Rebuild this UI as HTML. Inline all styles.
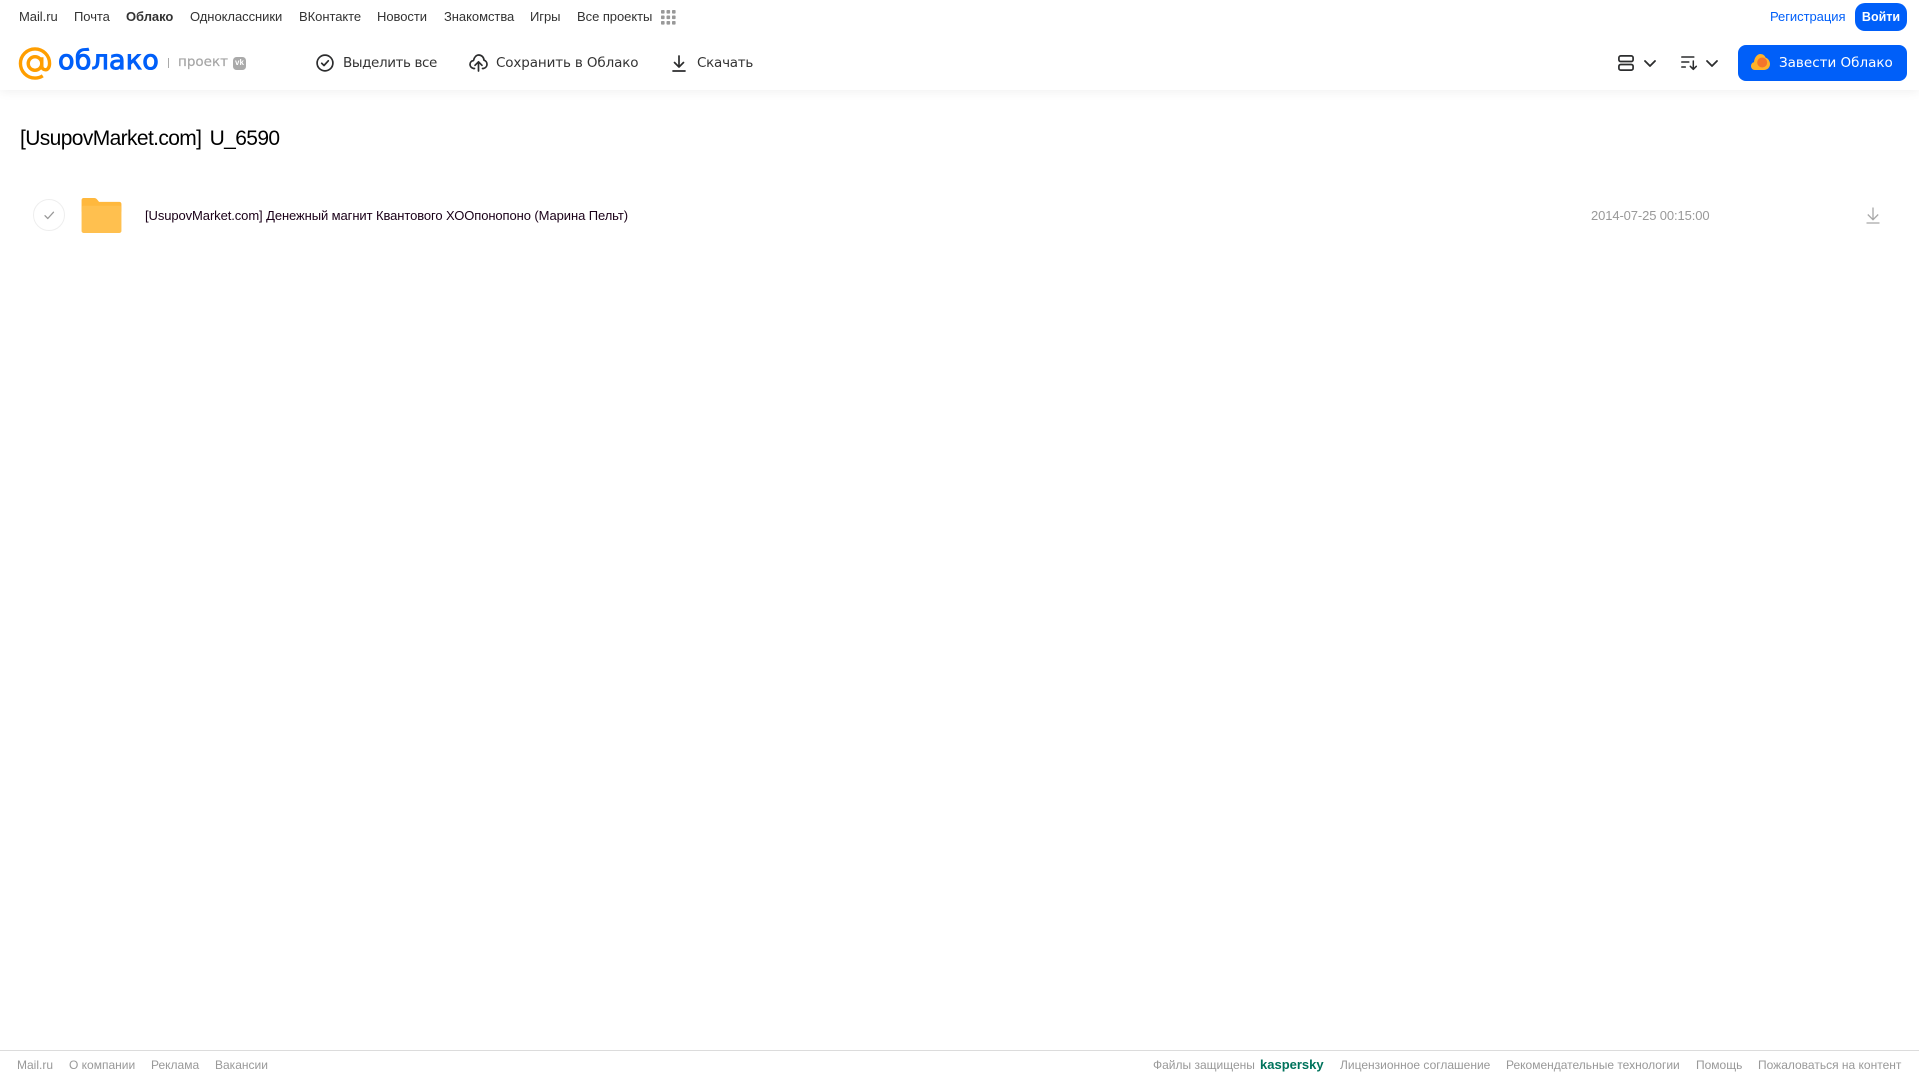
<!DOCTYPE html>
<html lang="ru"><head><meta charset="utf-8"><title>Облако</title>
<style>
html,body{margin:0;padding:0;background:#fff}
body{width:1919px;height:1079px;position:relative;overflow:hidden;font-family:"Liberation Sans",sans-serif}
.t{position:absolute;white-space:nowrap;line-height:20px;height:20px}
.n{top:7px;font-size:13px;color:#333;letter-spacing:-.05px}
.a{top:53px;font-family:"DejaVu Sans",sans-serif;font-size:13.5px;color:#333}
.f{top:1055px;font-size:12px;color:#999}
svg{position:absolute;display:block;overflow:visible}
#hd{position:absolute;left:0;top:0;width:1919px;height:90px;background:#fff;box-shadow:0 2px 10px rgba(0,0,0,.06)}
</style></head><body>
<div id="hd"></div>
<span class="t n" style="left:19px">Mail.ru</span>
<span class="t n" style="left:74px">Почта</span>
<span class="t n" style="left:126px;font-weight:bold">Облако</span>
<span class="t n" style="left:190px">Одноклассники</span>
<span class="t n" style="left:299px">ВКонтакте</span>
<span class="t n" style="left:377px">Новости</span>
<span class="t n" style="left:444px">Знакомства</span>
<span class="t n" style="left:530px">Игры</span>
<span class="t n" style="left:577px">Все проекты</span>
<svg style="left:661px;top:10px" width="15" height="15" fill="#999"><rect width="3.6" height="3.6" rx=".8"/><rect x="5.5" width="3.6" height="3.6" rx=".8"/><rect x="11" width="3.6" height="3.6" rx=".8"/><rect y="5.5" width="3.6" height="3.6" rx=".8"/><rect x="5.500" y="5.5" width="3.6" height="3.6" rx=".8"/><rect x="11" y="5.5" width="3.6" height="3.6" rx=".8"/><rect y="11" width="3.6" height="3.6" rx=".8"/><rect x="5.5" y="11" width="3.6" height="3.6" rx=".8"/><rect x="11" y="11" width="3.6" height="3.6" rx=".8"/></svg>
<span class="t n" style="left:1770px;color:#005ff9">Регистрация</span>
<div style="position:absolute;left:1855px;top:3px;width:52px;height:28px;border-radius:10px;background:#005ff9;color:#fff;font-size:12.5px;font-weight:bold;line-height:28px;text-align:center">Войти</div>

<svg style="left:18px;top:47px" width="34" height="33" viewBox="0 0 34 34" fill="none" stroke="#ff9e00" stroke-width="3.5"><circle cx="17" cy="17" r="7"/><path d="M24 10.500V19.500c0 2.600 1.700 4 3.800 4 2.300 0 4.200-2.500 4.200-6.500C32 8.700 25.300 2 17 2S2 8.700 2 17s6.700 15 15 15c3 0 5.700-.8 8-2.300"/></svg>
<span class="t" style="left:58px;top:44px;height:34px;line-height:34px;font-family:'DejaVu Sans',sans-serif;font-size:27px;letter-spacing:.2px;color:#005ff9;-webkit-text-stroke:1px #005ff9">облако</span>
<div style="position:absolute;left:168px;top:58px;width:1px;height:10px;background:#aaa"></div>
<span class="t" style="left:178px;top:52px;font-family:'DejaVu Sans',sans-serif;font-size:13.5px;color:#a6a6a6;-webkit-text-stroke:.2px #a6a6a6">проект</span>
<div style="position:absolute;left:233px;top:57px;width:13px;height:13px;border-radius:3.500px;background:#aaa;color:#fff;font-size:8px;font-weight:bold;line-height:12px;text-align:center">vk</div>

<svg style="left:316px;top:54px" width="18" height="18" viewBox="0 0 18 18" fill="none" stroke="#2c2d2e" stroke-width="1.700" stroke-linecap="round" stroke-linejoin="round"><circle cx="9" cy="9" r="7.900"/><path d="M5.700 9.300 8 11.500l4.300-4.700"/></svg>
<span class="t a" style="left:343px;letter-spacing:-.4px">Выделить все</span>
<svg style="left:469px;top:54px" width="19" height="18" viewBox="0 0 19 18" fill="none" stroke="#2c2d2e" stroke-width="1.700" stroke-linecap="round" stroke-linejoin="round"><path d="M5.500 14.500H4.600C2.500 14 1 12.400 1 10.400c0-2 1.500-3.600 3.500-3.900C5.200 3.300 7.200 1 9.800 1c2.800 0 5 2.300 5.200 5.200 1.800.5 3 2.200 3 4 0 2.100-1.500 3.900-3.600 4.300h-.9"/><path d="M9.500 17V8M6 11.300l3.500-3.500 3.500 3.500"/></svg>
<span class="t a" style="left:496px;letter-spacing:-.13px">Сохранить в Облако</span>
<svg style="left:672px;top:55px" width="14" height="17" viewBox="0 0 14 17" fill="none" stroke="#2c2d2e" stroke-width="1.700" stroke-linecap="round" stroke-linejoin="round"><path d="M7 1v10.500M2.500 7.500 7 12l4.500-4.500M1 16h12"/></svg>
<span class="t a" style="left:697px;letter-spacing:-.26px">Скачать</span>

<svg style="left:1618px;top:55px" width="16" height="16" viewBox="0 0 16 16" fill="none" stroke="#2c2d2e" stroke-width="1.700"><rect x=".9" y=".9" width="14.200" height="5.600" rx="1.800"/><rect x=".9" y="9.500" width="14.200" height="5.600" rx="1.800"/></svg>
<svg style="left:1644px;top:60px" width="12" height="7" viewBox="0 0 12 7" fill="none" stroke="#2c2d2e" stroke-width="1.800" stroke-linecap="round" stroke-linejoin="round"><path d="M1 1l5 5 5-5"/></svg>
<svg style="left:1681px;top:56px" width="16" height="14" viewBox="0 0 16 14" fill="none" stroke="#2c2d2e" stroke-width="1.500" stroke-linecap="round" stroke-linejoin="round"><path d="M.8 1h12M.8 6h7M.8 11h3.500M12.300 5v8M9.300 10.300l3 3 3-3"/></svg>
<svg style="left:1706px;top:60px" width="12" height="7" viewBox="0 0 12 7" fill="none" stroke="#2c2d2e" stroke-width="1.800" stroke-linecap="round" stroke-linejoin="round"><path d="M1 1l5 5 5-5"/></svg>

<div style="position:absolute;left:1738px;top:45px;width:169px;height:36px;border-radius:8px;background:#005ff9"></div>
<svg style="left:1751px;top:54px" width="19" height="16" viewBox="0 0 19 16"><path d="M4 16C1.700 16 0 14.300 0 12c0-1.900 1.300-3.500 3-3.900C3.400 3.500 6.200 0 9.300 0c2.500 0 4.500 1.400 5.300 3.600C17 4.300 19 7 19 10c0 3.500-2.700 6-6 6z" fill="#ffb229"/><circle cx="11.200" cy="8.500" r="5" fill="#f4752a"/></svg>
<span class="t a" style="left:1779px;color:#fff">Завести Облако</span>

<span class="t" style="left:20px;top:126px;height:26px;line-height:26px;font-size:21px;letter-spacing:-.62px;word-spacing:3px;color:#000">[UsupovMarket.com] U_6590</span>

<div style="position:absolute;left:33px;top:199px;width:30px;height:30px;border:1px solid #eeeeee;border-radius:50%"></div>
<svg style="left:44px;top:211px" width="11" height="9" viewBox="0 0 11 9" fill="none" stroke="#999" stroke-width="1.300" stroke-linecap="round" stroke-linejoin="round"><path d="M1 4.700 3.800 7.500 9.500 1.200"/></svg>
<svg style="left:80.500px;top:198px" width="41" height="35" viewBox="0 0 41 36"><path d="M2 0h11c1.300 0 2.200.5 3 1.500L18 4h21c1.100 0 2 .9 2 2v8H0V2C0 .9.900 0 2 0z" fill="#ffb83d"/><path d="M2 8h37c1.100 0 2 .9 2 2v24c0 1.100-.9 2-2 2H2c-1.100 0-2-.9-2-2V10c0-1.100.9-2 2-2z" fill="#ffc04f"/></svg>
<span class="t" style="left:145px;top:206px;font-size:13px;letter-spacing:-.09px;color:#1a0018">[UsupovMarket.com] Денежный магнит Квантового ХООпонопоно (Марина Пельт)</span>
<span class="t" style="left:1591px;top:206px;font-size:13px;letter-spacing:-.12px;color:#999">2014-07-25 00:15:00</span>
<svg style="left:1866px;top:207px" width="14" height="17" viewBox="0 0 14 17" fill="none" stroke="#a8a8a8" stroke-width="1.300"><path d="M7 .5v12M1.800 7.500 7 12.700l5.200-5.200M.5 16h13"/></svg>

<div style="position:absolute;left:0;top:1050px;width:1919px;height:1px;background:#dcdcdc"></div>
<span class="t f" style="left:17px">Mail.ru</span>
<span class="t f" style="left:69px">О компании</span>
<span class="t f" style="left:151px">Реклама</span>
<span class="t f" style="left:215px">Вакансии</span>
<span class="t f" style="left:1153px">Файлы защищены</span>
<span class="t f" style="left:1260px;color:#00735c;font-weight:bold;font-size:13px">kaspersky</span>
<span class="t f" style="left:1340px">Лицензионное соглашение</span>
<span class="t f" style="left:1506px">Рекомендательные технологии</span>
<span class="t f" style="left:1696px">Помощь</span>
<span class="t f" style="left:1758px">Пожаловаться на контент</span>
</body></html>
